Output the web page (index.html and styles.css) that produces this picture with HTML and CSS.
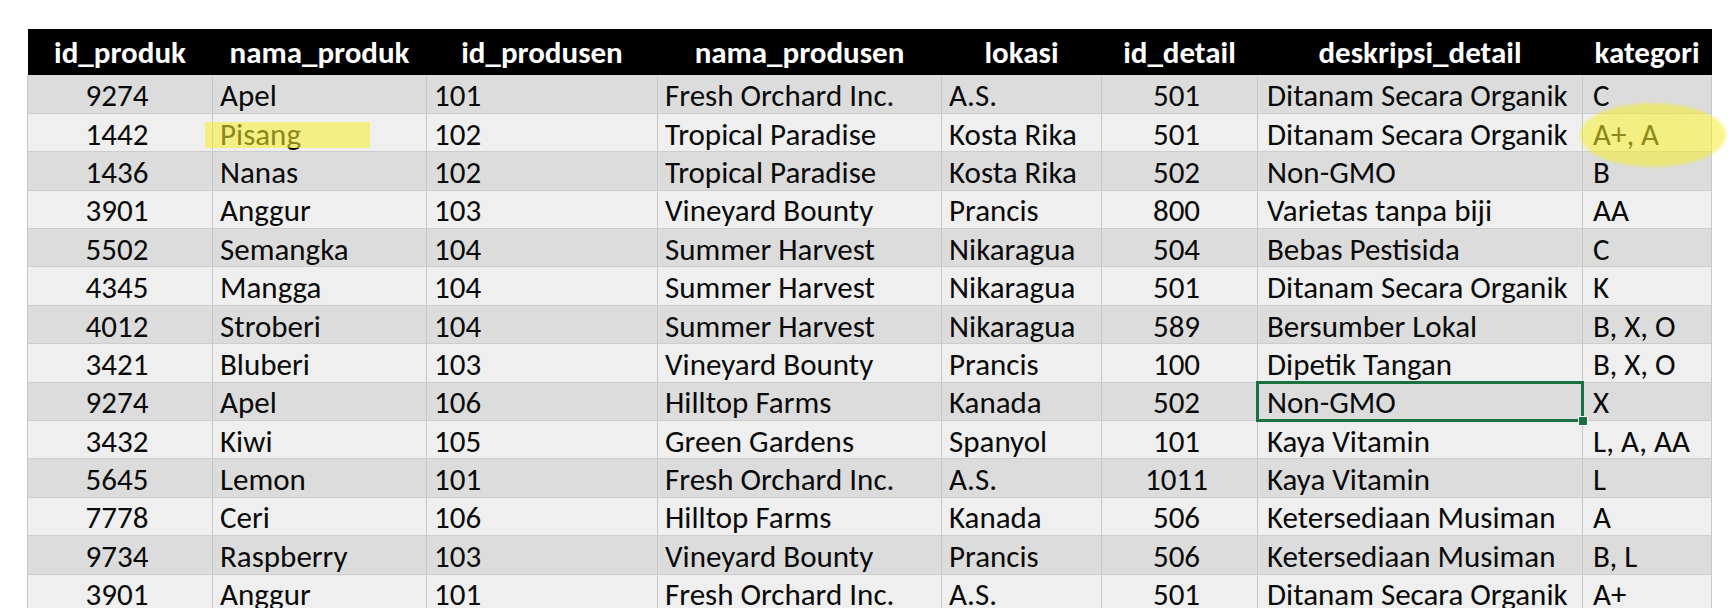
FILE: index.html
```html
<!DOCTYPE html>
<html lang="id">
<head>
<meta charset="utf-8">
<title>Tabel Produk</title>
<link rel="stylesheet" href="styles.css">
</head>
<body>
<div class="sheet">
  <table class="grid">
    <colgroup>
      <col class="c1"><col class="c2"><col class="c3"><col class="c4"><col class="c5"><col class="c6"><col class="c7"><col class="c8">
    </colgroup>
    <thead>
      <tr>
        <th>id_produk</th><th>nama_produk</th><th>id_produsen</th><th>nama_produsen</th><th>lokasi</th><th>id_detail</th><th>deskripsi_detail</th><th>kategori</th>
      </tr>
    </thead>
    <tbody>
      <tr><td class="num">9274</td><td>Apel</td><td>101</td><td>Fresh Orchard Inc.</td><td>A.S.</td><td class="num">501</td><td class="desc">Ditanam Secara Organik</td><td class="kat">C</td></tr>
      <tr><td class="num">1442</td><td>Pisang</td><td>102</td><td>Tropical Paradise</td><td>Kosta Rika</td><td class="num">501</td><td class="desc">Ditanam Secara Organik</td><td class="kat">A+, A</td></tr>
      <tr><td class="num">1436</td><td>Nanas</td><td>102</td><td>Tropical Paradise</td><td>Kosta Rika</td><td class="num">502</td><td class="desc">Non-GMO</td><td class="kat">B</td></tr>
      <tr><td class="num">3901</td><td>Anggur</td><td>103</td><td>Vineyard Bounty</td><td>Prancis</td><td class="num">800</td><td class="desc">Varietas tanpa biji</td><td class="kat">AA</td></tr>
      <tr><td class="num">5502</td><td>Semangka</td><td>104</td><td>Summer Harvest</td><td>Nikaragua</td><td class="num">504</td><td class="desc">Bebas Pestisida</td><td class="kat">C</td></tr>
      <tr><td class="num">4345</td><td>Mangga</td><td>104</td><td>Summer Harvest</td><td>Nikaragua</td><td class="num">501</td><td class="desc">Ditanam Secara Organik</td><td class="kat">K</td></tr>
      <tr><td class="num">4012</td><td>Stroberi</td><td>104</td><td>Summer Harvest</td><td>Nikaragua</td><td class="num">589</td><td class="desc">Bersumber Lokal</td><td class="kat">B, X, O</td></tr>
      <tr><td class="num">3421</td><td>Bluberi</td><td>103</td><td>Vineyard Bounty</td><td>Prancis</td><td class="num">100</td><td class="desc">Dipetik Tangan</td><td class="kat">B, X, O</td></tr>
      <tr><td class="num">9274</td><td>Apel</td><td>106</td><td>Hilltop Farms</td><td>Kanada</td><td class="num">502</td><td class="desc selected">Non-GMO</td><td class="kat">X</td></tr>
      <tr><td class="num">3432</td><td>Kiwi</td><td>105</td><td>Green Gardens</td><td>Spanyol</td><td class="num">101</td><td class="desc">Kaya Vitamin</td><td class="kat">L, A, AA</td></tr>
      <tr><td class="num">5645</td><td>Lemon</td><td>101</td><td>Fresh Orchard Inc.</td><td>A.S.</td><td class="num">1011</td><td class="desc">Kaya Vitamin</td><td class="kat">L</td></tr>
      <tr><td class="num">7778</td><td>Ceri</td><td>106</td><td>Hilltop Farms</td><td>Kanada</td><td class="num">506</td><td class="desc">Ketersediaan Musiman</td><td class="kat">A</td></tr>
      <tr><td class="num">9734</td><td>Raspberry</td><td>103</td><td>Vineyard Bounty</td><td>Prancis</td><td class="num">506</td><td class="desc">Ketersediaan Musiman</td><td class="kat">B, L</td></tr>
      <tr><td class="num">3901</td><td>Anggur</td><td>101</td><td>Fresh Orchard Inc.</td><td>A.S.</td><td class="num">501</td><td class="desc">Ditanam Secara Organik</td><td class="kat">A+</td></tr>
    </tbody>
  </table>
  <div class="mark mark-pisang"></div>
  <div class="mark mark-kategori"></div>
</div>
</body>
</html>
```

FILE: styles.css
```css
html, body {
  margin: 0;
  padding: 0;
  background: #ffffff;
  overflow: hidden;
}

body {
  width: 1728px;
  height: 608px;
}

.sheet {
  position: relative;
  padding: 29px 0 0 27px;
  font-family: Carlito, Calibri, "Lato", "Liberation Sans", sans-serif;
  color: #0a0a0a;
}

.grid {
  border-collapse: collapse;
  table-layout: fixed;
  width: 1684px;
  font-size: 31px;
}

.c1 { width: 185px; }
.c2 { width: 214px; }
.c3 { width: 231px; }
.c4 { width: 284px; }
.c5 { width: 160px; }
.c6 { width: 156px; }
.c7 { width: 325px; }
.c8 { width: 129px; }

.grid thead th {
  background: #000000;
  color: #ffffff;
  font-weight: 700;
  height: 46px;
  padding: 0;
  text-align: center;
  vertical-align: middle;
  line-height: 44px;
  white-space: nowrap;
  overflow: hidden;
}

.grid tbody tr {
  height: 38.4px;
}

.grid tbody tr:nth-child(odd) td {
  background: #dcdcdc;
}

.grid tbody tr:nth-child(even) td {
  background: #efefef;
}

.grid td {
  border-left: 1px solid #c8c8c8;
  border-right: 1px solid #c8c8c8;
  border-bottom: 1px solid #cdcdcd;
  padding: 2px 0 0 7px;
  line-height: 34px;
  white-space: nowrap;
  overflow: visible;
  vertical-align: middle;
}

.grid td.num {
  text-align: center;
  padding-left: 0;
  padding-right: 6px;
}

.grid td.desc {
  padding-left: 9px;
}

.grid td.kat {
  padding-left: 10px;
}

.grid td.selected {
  position: relative;
}

.grid td.selected::before {
  content: "";
  position: absolute;
  left: -2px;
  top: -2px;
  right: -2px;
  bottom: -2px;
  border: 3px solid #1a7040;
}

.grid td.selected::after {
  content: "";
  position: absolute;
  right: -6px;
  bottom: -6px;
  width: 8px;
  height: 8px;
  background: #1a7040;
  border: 1px solid #ffffff;
}

.mark {
  position: absolute;
  pointer-events: none;
}

.mark-pisang {
  left: 205px;
  top: 122px;
  width: 165px;
  height: 26px;
  background: rgba(245, 238, 40, 0.55);
}

.mark-kategori {
  left: 1580px;
  top: 103px;
  width: 146px;
  height: 64px;
  border-radius: 50%;
  background: radial-gradient(ellipse at 55% 50%, rgba(245, 238, 40, 0.56) 0%, rgba(245, 238, 40, 0.54) 70%, rgba(245, 238, 40, 0.3) 90%, rgba(245, 238, 40, 0) 100%);
  filter: blur(1.5px);
}
```
